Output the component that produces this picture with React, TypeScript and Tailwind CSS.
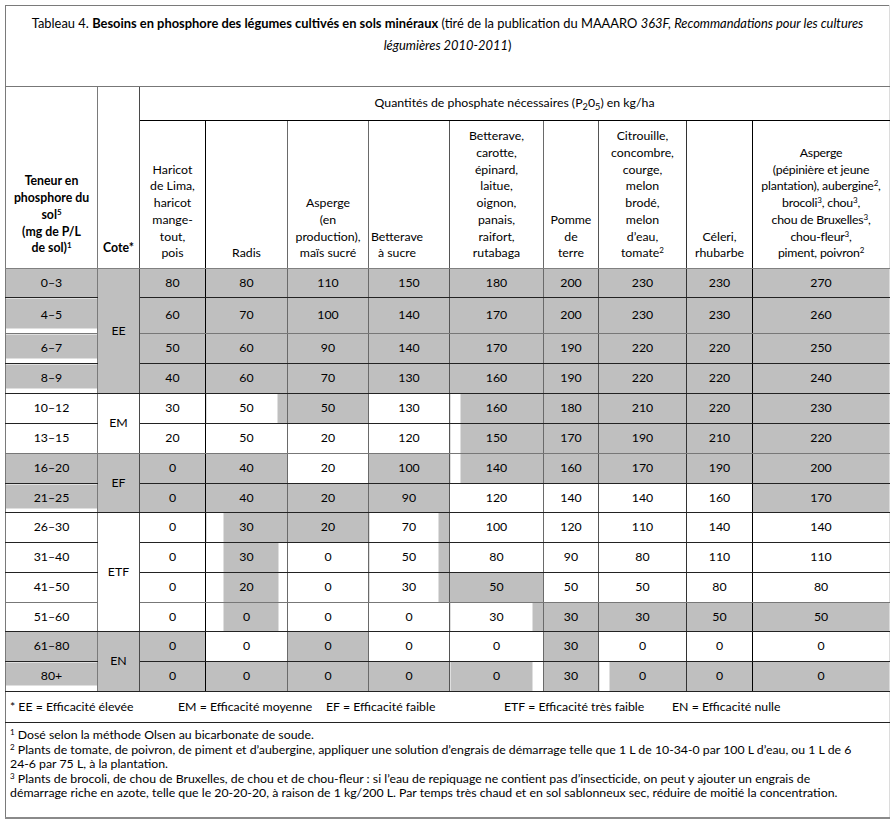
const G = "bg-[#bfbfbf]";
const W = "";
const WB4 = "bg-[linear-gradient(to_top,#fff_4px,#bfbfbf_4px)]";
const WB5 = "bg-[linear-gradient(to_top,#fff_5px,#bfbfbf_5px)]";
const WB6 = "bg-[linear-gradient(to_top,#fff_6px,#bfbfbf_6px)]";
const GL10 = "bg-[linear-gradient(to_right,#fff_10px,#bfbfbf_10px)]";
const GL17 = "bg-[linear-gradient(to_right,#fff_17px,#bfbfbf_17px)]";
const GMID = "bg-[linear-gradient(to_right,#fff_17px,#bfbfbf_17px,#bfbfbf_72px,#fff_72px)]";
const WR10 = "bg-[linear-gradient(to_left,#bfbfbf_10px,#fff_10px)]";
const WR11 = "bg-[linear-gradient(to_left,#bfbfbf_11px,#fff_11px)]";
const GWR11 = "bg-[linear-gradient(to_left,#fff_11px,#bfbfbf_11px)]";

// right border colour of each column
const colR = [
  "border-r-[#7a7a7a]",
  "border-r-[#4a4a4a]",
  "border-r-black",
  "border-r-[#6a6a6a]",
  "border-r-[#6a6a6a]",
  "border-r-[#555]",
  "border-r-[#6a6a6a]",
  "border-r-[#555]",
  "border-r-[#333]",
  "border-r-black",
  "border-r-[#dcdcdc]",
];

const colW = ["w-[92px]", "w-[42px]", "w-[66px]", "w-[82px]", "w-[81px]", "w-[81px]", "w-[94px]", "w-[55px]", "w-[88px]", "w-[66px]", "w-[137px]"];

interface Row {
  t: string;
  h: string;
  b: string;
  bg: string[];
  v: number[];
}

const rows: Row[] = [
  { t: "0–3", h: "h-[29px]", b: "border-b-[#222]", bg: [G, G, G, G, G, G, G, G, G, G], v: [80, 80, 110, 150, 180, 200, 230, 230, 270] },
  { t: "4–5", h: "h-[36px]", b: "border-b-[#777]", bg: [WB5, G, G, G, G, G, G, G, G, G], v: [60, 70, 100, 140, 170, 200, 230, 230, 260] },
  { t: "6–7", h: "h-[30px]", b: "border-b-[#222]", bg: [WB5, G, G, G, G, G, G, G, G, G], v: [50, 60, 90, 140, 170, 190, 220, 220, 250] },
  { t: "8–9", h: "h-[30px]", b: "border-b-[#222]", bg: [WB5, G, G, G, G, G, G, G, G, G], v: [40, 60, 70, 130, 160, 190, 220, 220, 240] },
  { t: "10–12", h: "h-[30px]", b: "border-b-[#222]", bg: [W, W, WR10, G, W, GL10, G, G, G, G], v: [30, 50, 50, 130, 160, 180, 210, 220, 230] },
  { t: "13–15", h: "h-[30px]", b: "border-b-[#777]", bg: [W, W, W, W, W, GL10, G, G, G, G], v: [20, 50, 20, 120, 150, 170, 190, 210, 220] },
  { t: "16–20", h: "h-[30px]", b: "border-b-[#222]", bg: [G, G, G, W, G, GL10, G, G, G, G], v: [0, 40, 20, 100, 140, 160, 170, 190, 200] },
  { t: "21–25", h: "h-[29px]", b: "border-b-[#222]", bg: [WB4, G, G, G, G, W, W, W, W, G], v: [0, 40, 20, 90, 120, 140, 140, 160, 170] },
  { t: "26–30", h: "h-[30px]", b: "border-b-[#222]", bg: [W, W, GL17, G, WR11, W, W, W, W, W], v: [0, 30, 20, 70, 100, 120, 110, 140, 140] },
  { t: "31–40", h: "h-[30px]", b: "border-b-[#222]", bg: [W, W, GMID, W, WR11, W, W, W, W, W], v: [0, 30, 0, 50, 80, 90, 80, 110, 110] },
  { t: "41–50", h: "h-[30px]", b: "border-b-[#777]", bg: [W, W, GMID, W, WR11, G, W, W, W, W], v: [0, 20, 0, 30, 50, 50, 50, 80, 80] },
  { t: "51–60", h: "h-[29px]", b: "border-b-[#222]", bg: [W, W, GMID, W, W, WR11, G, G, G, G], v: [0, 0, 0, 0, 30, 30, 30, 50, 50] },
  { t: "61–80", h: "h-[30px]", b: "border-b-[#222]", bg: [G, G, W, G, W, W, G, W, W, W], v: [0, 0, 0, 0, 0, 30, 0, 0, 0] },
  { t: "80+", h: "h-[30px]", b: "border-b-[#222]", bg: [WB6, G, G, G, G, GWR11, G, GL10, G, G], v: [0, 0, 0, 0, 0, 30, 0, 0, 0] },
];

// the Cote column, one cell per efficiency class
const cotes: Record<number, { label: string; span: number; bg: string; b: string }> = {
  0: { label: "EE", span: 4, bg: G, b: "border-b-[#222]" },
  4: { label: "EM", span: 2, bg: W, b: "border-b-[#777]" },
  6: { label: "EF", span: 2, bg: G, b: "border-b-[#222]" },
  8: { label: "ETF", span: 4, bg: W, b: "border-b-[#222]" },
  12: { label: "EN", span: 2, bg: G, b: "border-b-[#222]" },
};

function Sup({ children }: { children: React.ReactNode }) {
  return <sup className="text-[8px]">{children}</sup>;
}

const head = "border-r border-b border-b-[#808080] align-bottom text-center pb-[6px] leading-[16.7px] whitespace-nowrap";

export default function App() {
  return (
    <div className="bg-white w-[895px] h-[824px] pt-[5px] font-['Lato',sans-serif] text-[12.3px] text-black">
      <table className="ml-[5px] w-[884px] table-fixed border-collapse border-l border-t border-l-[#7a7a7a] border-t-[#7a7a7a]">
        <colgroup>
          {colW.map((w, i) => (
            <col key={i} className={w} />
          ))}
        </colgroup>
        <tbody>
          <tr className="h-[81px]">
            <td colSpan={11} className="border-r border-r-[#dcdcdc] border-b border-b-[#777] align-top pt-[6px] text-center text-[12.9px] leading-[22px] whitespace-nowrap">
              Tableau 4. <b>Besoins en phosphore des légumes cultivés en sols minéraux</b> (tiré de la publication du MAAARO{" "}
              <i>363F, Recommandations pour les cultures</i>
              <br />
              <i>légumières 2010-2011</i>)
            </td>
          </tr>
          <tr className="h-[34px]">
            <td rowSpan={2} className={`${head} ${colR[0]} pb-[11px] font-bold`}>
              Teneur en
              <br />
              phosphore du
              <br />
              sol<Sup>5</Sup>
              <br />
              (mg de P/L
              <br />
              de sol)<Sup>1</Sup>
            </td>
            <td rowSpan={2} className={`${head} ${colR[1]} pb-[11px] font-bold`}>
              Cote*
            </td>
            <td colSpan={9} className="border-r border-r-[#dcdcdc] border-b border-b-black text-center align-middle whitespace-nowrap">
              Quantités de phosphate nécessaires (P<sub>2</sub>0<sub>5</sub>) en kg/ha
            </td>
          </tr>
          <tr className="h-[148px]">
            <td className={`${head} ${colR[2]}`}>
              Haricot
              <br />
              de Lima,
              <br />
              haricot
              <br />
              mange-
              <br />
              tout,
              <br />
              pois
            </td>
            <td className={`${head} ${colR[3]}`}>Radis</td>
            <td className={`${head} ${colR[4]}`}>
              Asperge
              <br />
              (en
              <br />
              production),
              <br />
              maïs sucré
            </td>
            <td className={`${head} ${colR[5]} pr-[24px]`}>
              Betterave
              <br />à sucre
            </td>
            <td className={`${head} ${colR[6]}`}>
              Betterave,
              <br />
              carotte,
              <br />
              épinard,
              <br />
              laitue,
              <br />
              oignon,
              <br />
              panais,
              <br />
              raifort,
              <br />
              rutabaga
            </td>
            <td className={`${head} ${colR[7]}`}>
              Pomme
              <br />
              de
              <br />
              terre
            </td>
            <td className={`${head} ${colR[8]}`}>
              Citrouille,
              <br />
              concombre,
              <br />
              courge,
              <br />
              melon
              <br />
              brodé,
              <br />
              melon
              <br />
              d’eau,
              <br />
              tomate<Sup>2</Sup>
            </td>
            <td className={`${head} ${colR[9]}`}>
              Céleri,
              <br />
              rhubarbe
            </td>
            <td className={`${head} ${colR[10]} tracking-[-0.2px]`}>
              Asperge
              <br />
              (pépinière et jeune
              <br />
              plantation), aubergine<Sup>2</Sup>,
              <br />
              brocoli<Sup>3</Sup>, chou<Sup>3</Sup>,
              <br />
              chou de Bruxelles<Sup>3</Sup>,
              <br />
              chou-fleur<Sup>3</Sup>,
              <br />
              piment, poivron<Sup>2</Sup>
            </td>
          </tr>
          {rows.map((r, ri) => {
            const cote = cotes[ri];
            return (
              <tr key={r.t} className={r.h}>
                <td className={`border-r border-b text-center align-middle ${colR[0]} ${r.b} ${r.bg[0]}`}>{r.t}</td>
                {cote && (
                  <td rowSpan={cote.span} className={`border-r border-b text-center align-middle ${colR[1]} ${cote.b} ${cote.bg}`}>
                    {cote.label}
                  </td>
                )}
                {r.v.map((v, vi) => (
                  <td key={vi} className={`border-r border-b text-center align-middle ${colR[vi + 2]} ${r.b} ${r.bg[vi + 1]}`}>
                    {v}
                  </td>
                ))}
              </tr>
            );
          })}
          <tr className="h-[31px]">
            <td colSpan={11} className="border-r border-r-[#dcdcdc] border-b border-b-[#222] align-middle pl-[4px] whitespace-nowrap">
              <div className="flex">
                <span className="w-[168px]">* EE = Efficacité élevée</span>
                <span className="w-[148px]">EM = Efficacité moyenne</span>
                <span className="w-[178px]">EF = Efficacité faible</span>
                <span className="w-[168px]">ETF = Efficacité très faible</span>
                <span>EN = Efficacité nulle</span>
              </div>
            </td>
          </tr>
          <tr className="h-[95px]">
            <td colSpan={11} className="border-r border-r-[#dcdcdc] border-b-2 border-b-[#8a8a8a] align-top pt-[5px] pl-[4px] leading-[14.6px] whitespace-nowrap">
              <p>
                <Sup>1</Sup> Dosé selon la méthode Olsen au bicarbonate de soude.
              </p>
              <p>
                <Sup>2</Sup> Plants de tomate, de poivron, de piment et d’aubergine, appliquer une solution d’engrais de démarrage telle que 1 L de 10-34-0 par 100 L d’eau, ou 1 L de 6
                <br />
                24-6 par 75 L, à la plantation.
              </p>
              <p>
                <Sup>3</Sup> Plants de brocoli, de chou de Bruxelles, de chou et de chou-fleur : si l’eau de repiquage ne contient pas d’insecticide, on peut y ajouter un engrais de
                <br />
                démarrage riche en azote, telle que le 20-20-20, à raison de 1 kg/200 L. Par temps très chaud et en sol sablonneux sec, réduire de moitié la concentration.
              </p>
            </td>
          </tr>
        </tbody>
      </table>
    </div>
  );
}
